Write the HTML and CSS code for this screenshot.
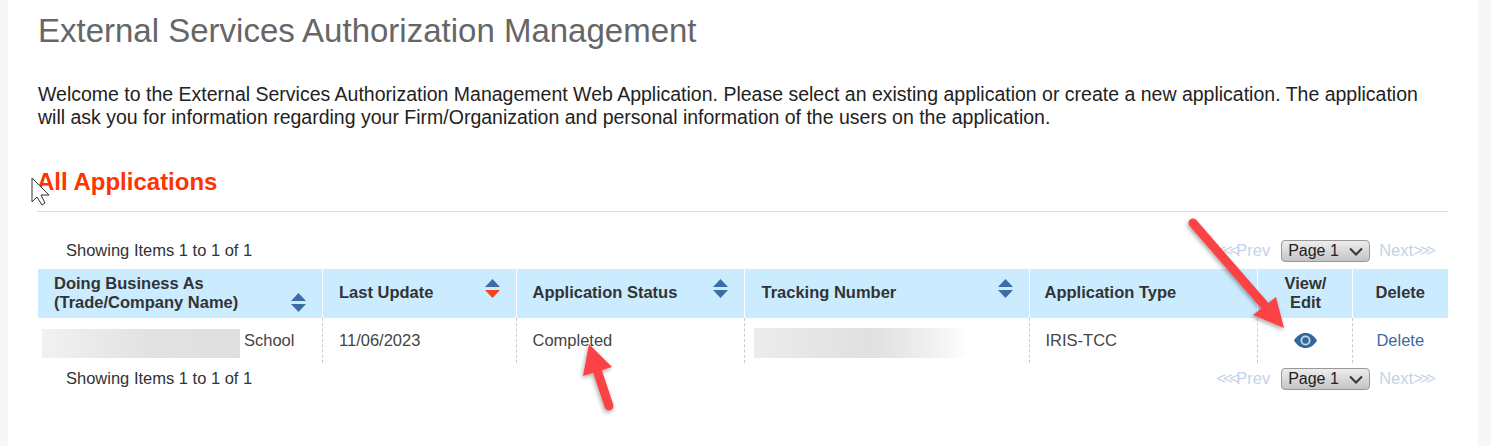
FILE: index.html
```html
<!DOCTYPE html>
<html lang="en">
<head>
    <meta charset="UTF-8">
    <title>External Services Authorization Management</title>
    <link rel="stylesheet" href="styles.css">
</head>
<body>

<div class="panel">
    <h1>External Services Authorization Management</h1>
    <p class="intro">Welcome to the External Services Authorization Management Web Application. Please select an existing application or create a new application. The application will ask you for information regarding your Firm/Organization and personal information of the users on the application.</p>

    <h2>All Applications</h2>

    <!--top pager-->
    <div class="pager pager_top">
        <span>Showing Items 1 to 1 of 1</span>
        <div class="pager_links">
            <a class="pager_link"><span class="chevrons">&lt;&lt;&lt;</span>Prev</a>
            <div class="page_select">Page 1
                <svg width="14" height="9" viewBox="0 0 14 9"><path d="M1 1.500l6 6 6-6" fill="none" stroke="#333" stroke-width="2"/></svg>
            </div>
            <a class="pager_link">Next<span class="chevrons">&gt;&gt;&gt;</span></a>
        </div>
    </div>

    <table class="apps">
        <colgroup>
            <col class="col_name">
            <col class="col_update">
            <col class="col_status">
            <col class="col_tracking">
            <col class="col_type">
            <col class="col_view">
            <col class="col_delete">
        </colgroup>
        <thead>
            <tr>
                <th>
                    <div class="th_sort th_sort_low">
                        <span>Doing Business As<br>(Trade/Company Name)</span>
                        <svg class="sort" viewBox="0 0 15 19"><path d="M7.500 0L15 8H0z" fill="#3a6ea5"/><path d="M0 11h15l-7.500 8z" fill="#3a6ea5"/></svg>
                    </div>
                </th>
                <th>
                    <div class="th_sort">
                        <span class="th_mid">Last Update</span>
                        <svg class="sort" viewBox="0 0 15 19"><path d="M7.500 0L15 8H0z" fill="#3a6ea5"/><path d="M0 11h15l-7.500 8z" fill="#f5421a"/></svg>
                    </div>
                </th>
                <th>
                    <div class="th_sort">
                        <span class="th_mid">Application Status</span>
                        <svg class="sort" viewBox="0 0 15 19"><path d="M7.500 0L15 8H0z" fill="#3a6ea5"/><path d="M0 11h15l-7.500 8z" fill="#3a6ea5"/></svg>
                    </div>
                </th>
                <th>
                    <div class="th_sort">
                        <span class="th_mid">Tracking Number</span>
                        <svg class="sort" viewBox="0 0 15 19"><path d="M7.500 0L15 8H0z" fill="#3a6ea5"/><path d="M0 11h15l-7.500 8z" fill="#3a6ea5"/></svg>
                    </div>
                </th>
                <th class="th_plain">Application Type</th>
                <th class="center th_plain th_view">View/<br>Edit</th>
                <th class="center th_plain">Delete</th>
            </tr>
        </thead>
        <tbody>
            <tr>
                <td class="cell_name"><span class="blur blur_name"></span><span>School</span></td>
                <td>11/06/2023</td>
                <td>Completed</td>
                <td class="cell_tracking"><span class="blur blur_tracking"></span></td>
                <td>IRIS-TCC</td>
                <td class="center th_view">
                    <svg class="eye" width="23" height="15" viewBox="0 0 23 15">
                        <path d="M0 7.500C3 2.500 7 0 11.500 0S20 2.500 23 7.500C20 12.500 16 15 11.500 15S3 12.500 0 7.500z" fill="#33679a"/>
                        <circle cx="11.500" cy="7.500" r="5" fill="#c9d9e8"/>
                        <circle cx="11.500" cy="7.500" r="3.200" fill="#33679a"/>
                    </svg>
                </td>
                <td class="center"><a class="delete_link">Delete</a></td>
            </tr>
        </tbody>
    </table>

    <!--bottom pager-->
    <div class="pager pager_bottom">
        <span>Showing Items 1 to 1 of 1</span>
        <div class="pager_links">
            <a class="pager_link"><span class="chevrons">&lt;&lt;&lt;</span>Prev</a>
            <div class="page_select">Page 1
                <svg width="14" height="9" viewBox="0 0 14 9"><path d="M1 1.500l6 6 6-6" fill="none" stroke="#333" stroke-width="2"/></svg>
            </div>
            <a class="pager_link">Next<span class="chevrons">&gt;&gt;&gt;</span></a>
        </div>
    </div>
</div>

<!--annotations drawn on top of the screenshot-->
<svg class="annotations" width="1491" height="446" viewBox="0 0 1491 446">
    <defs>
        <filter id="arrow_shadow" x="-30%" y="-30%" width="160%" height="160%">
            <feDropShadow dx="-1" dy="2" stdDeviation="2" flood-color="#000" flood-opacity="0.35"/>
        </filter>
    </defs>
    <g fill="#fb4245" filter="url(#arrow_shadow)">
        <path d="M1193 223L1266 307" stroke="#fb4245" stroke-width="9" stroke-linecap="round"/>
        <path d="M1284 328L1253 315L1276 297z"/>
        <path d="M609 406L596 367" stroke="#fb4245" stroke-width="9" stroke-linecap="round"/>
        <path d="M589 344L583 376L612 367z"/>
    </g>
    <path d="M32 178V202L37 197L42 205L45 203L41 195H49z" fill="#fff" stroke="#333" stroke-width="1"/>
</svg>

</body>
</html>
```

FILE: styles.css
```css
body, html {
    margin: 0;
    padding: 0;
    width: 100%;
    height: 100%;
    overflow: hidden;
    background: #f7f7f7;
    font-family: "Liberation Sans", Arial, sans-serif;
}

.panel {
    box-sizing: border-box;
    width: 1470px;
    height: 446px;
    margin-left: 8px;
    padding: 0 30px;
    background: #fff;
}

h1 {
    margin: 0;
    padding-top: 12px;
    font-size: 33px;
    font-weight: 400;
    line-height: 37px;
    color: #666;
}

.intro {
    margin: 34px 0 0;
    font-size: 19.500px;
    line-height: 23px;
    color: #222;
}

h2 {
    margin: 39px 0 0 -1px;
    padding-bottom: 15px;
    font-size: 24px;
    line-height: 28px;
    color: #ff3300;
    border-bottom: 1px solid #ddd;
}

.pager {
    display: flex;
    justify-content: space-between;
    align-items: center;
    padding: 0 15px 0 28px;
    font-size: 16.500px;
    color: #333;
}

.pager_top {
    margin-top: 25px;
    height: 26px;
    margin-bottom: 6px;
}

.pager_bottom {
    margin-top: 3px;
    height: 24px;
}

.pager_links {
    display: flex;
    align-items: center;
}

.pager_link {
    color: #c3d3e6;
}

.chevrons {
    letter-spacing: -3px;
}

.page_select {
    display: flex;
    align-items: center;
    justify-content: space-between;
    box-sizing: border-box;
    width: 89px;
    height: 22px;
    margin: 2px 9px 0 11px;
    padding: 0 6px;
    font-size: 16px;
    color: #222;
    border: 1px solid #999;
    border-radius: 4px;
    background: linear-gradient(#ededed, #c4c4c4);
}

.apps {
    width: 1410px;
    table-layout: fixed;
    border-collapse: collapse;
    font-size: 16.500px;
}

.col_name { width: 284px; }
.col_update { width: 194px; }
.col_status { width: 228px; }
.col_tracking { width: 285px; }
.col_type { width: 228px; }
.col_view { width: 95px; }
.col_delete { width: 96px; }

.apps th {
    height: 49px;
    padding: 0 16px;
    font-weight: 700;
    line-height: 19px;
    text-align: left;
    color: #333;
    background: #cbecff;
    border-right: 1px solid #fff;
    box-sizing: border-box;
}

.apps th:last-child {
    border-right: 0;
}

.apps td {
    height: 45px;
    padding: 0 16px;
    color: #444;
    border-right: 1px dashed #ccc;
    box-sizing: border-box;
}

.apps td:last-child {
    border-right: 0;
}

/*columns 2, 4 and 5 sit a pixel off the others*/
.apps th:nth-child(2), .apps td:nth-child(2) {
    padding-left: 16.500px;
}

.apps th:nth-child(4) {
    padding-left: 17px;
}

.apps th:nth-child(5) {
    padding-left: 15px;
}

.apps .th_plain {
    padding-bottom: 2px;
}

.apps .center {
    padding-left: 0;
    padding-right: 0;
    text-align: center;
}

.apps .th_view {
    padding-left: 2px;
}

.apps .cell_name {
    padding: 6px 0 0 4px;
    white-space: nowrap;
}

.apps .cell_tracking {
    padding-left: 9px;
    padding-top: 5px;
}

.blur {
    display: inline-block;
    height: 29px;
    vertical-align: -12px;
}

.blur_name {
    width: 198px;
    margin-right: 4px;
    background: linear-gradient(90deg, #f1f1f1, #e2e2e2 55%, #dfdfdf);
}

.blur_tracking {
    display: block;
    width: 216px;
    height: 30px;
    background: linear-gradient(90deg, #ececec, #e0e0e0 55%, #efefef 80%, #fff);
}

.th_sort {
    display: flex;
    justify-content: space-between;
    align-items: flex-start;
    height: 49px;
}

.th_sort span {
    padding-top: 5px;
}

.th_sort .th_mid {
    padding-top: 14px;
}

.sort {
    flex: none;
    width: 15px;
    height: 19px;
    margin-top: 10px;
}

.th_sort_low .sort {
    margin-top: 24px;
}

.eye {
    display: block;
    margin: 0 auto;
}

.delete_link {
    color: #3b6aa0;
}

.annotations {
    position: absolute;
    left: 0;
    top: 0;
    pointer-events: none;
}
```
